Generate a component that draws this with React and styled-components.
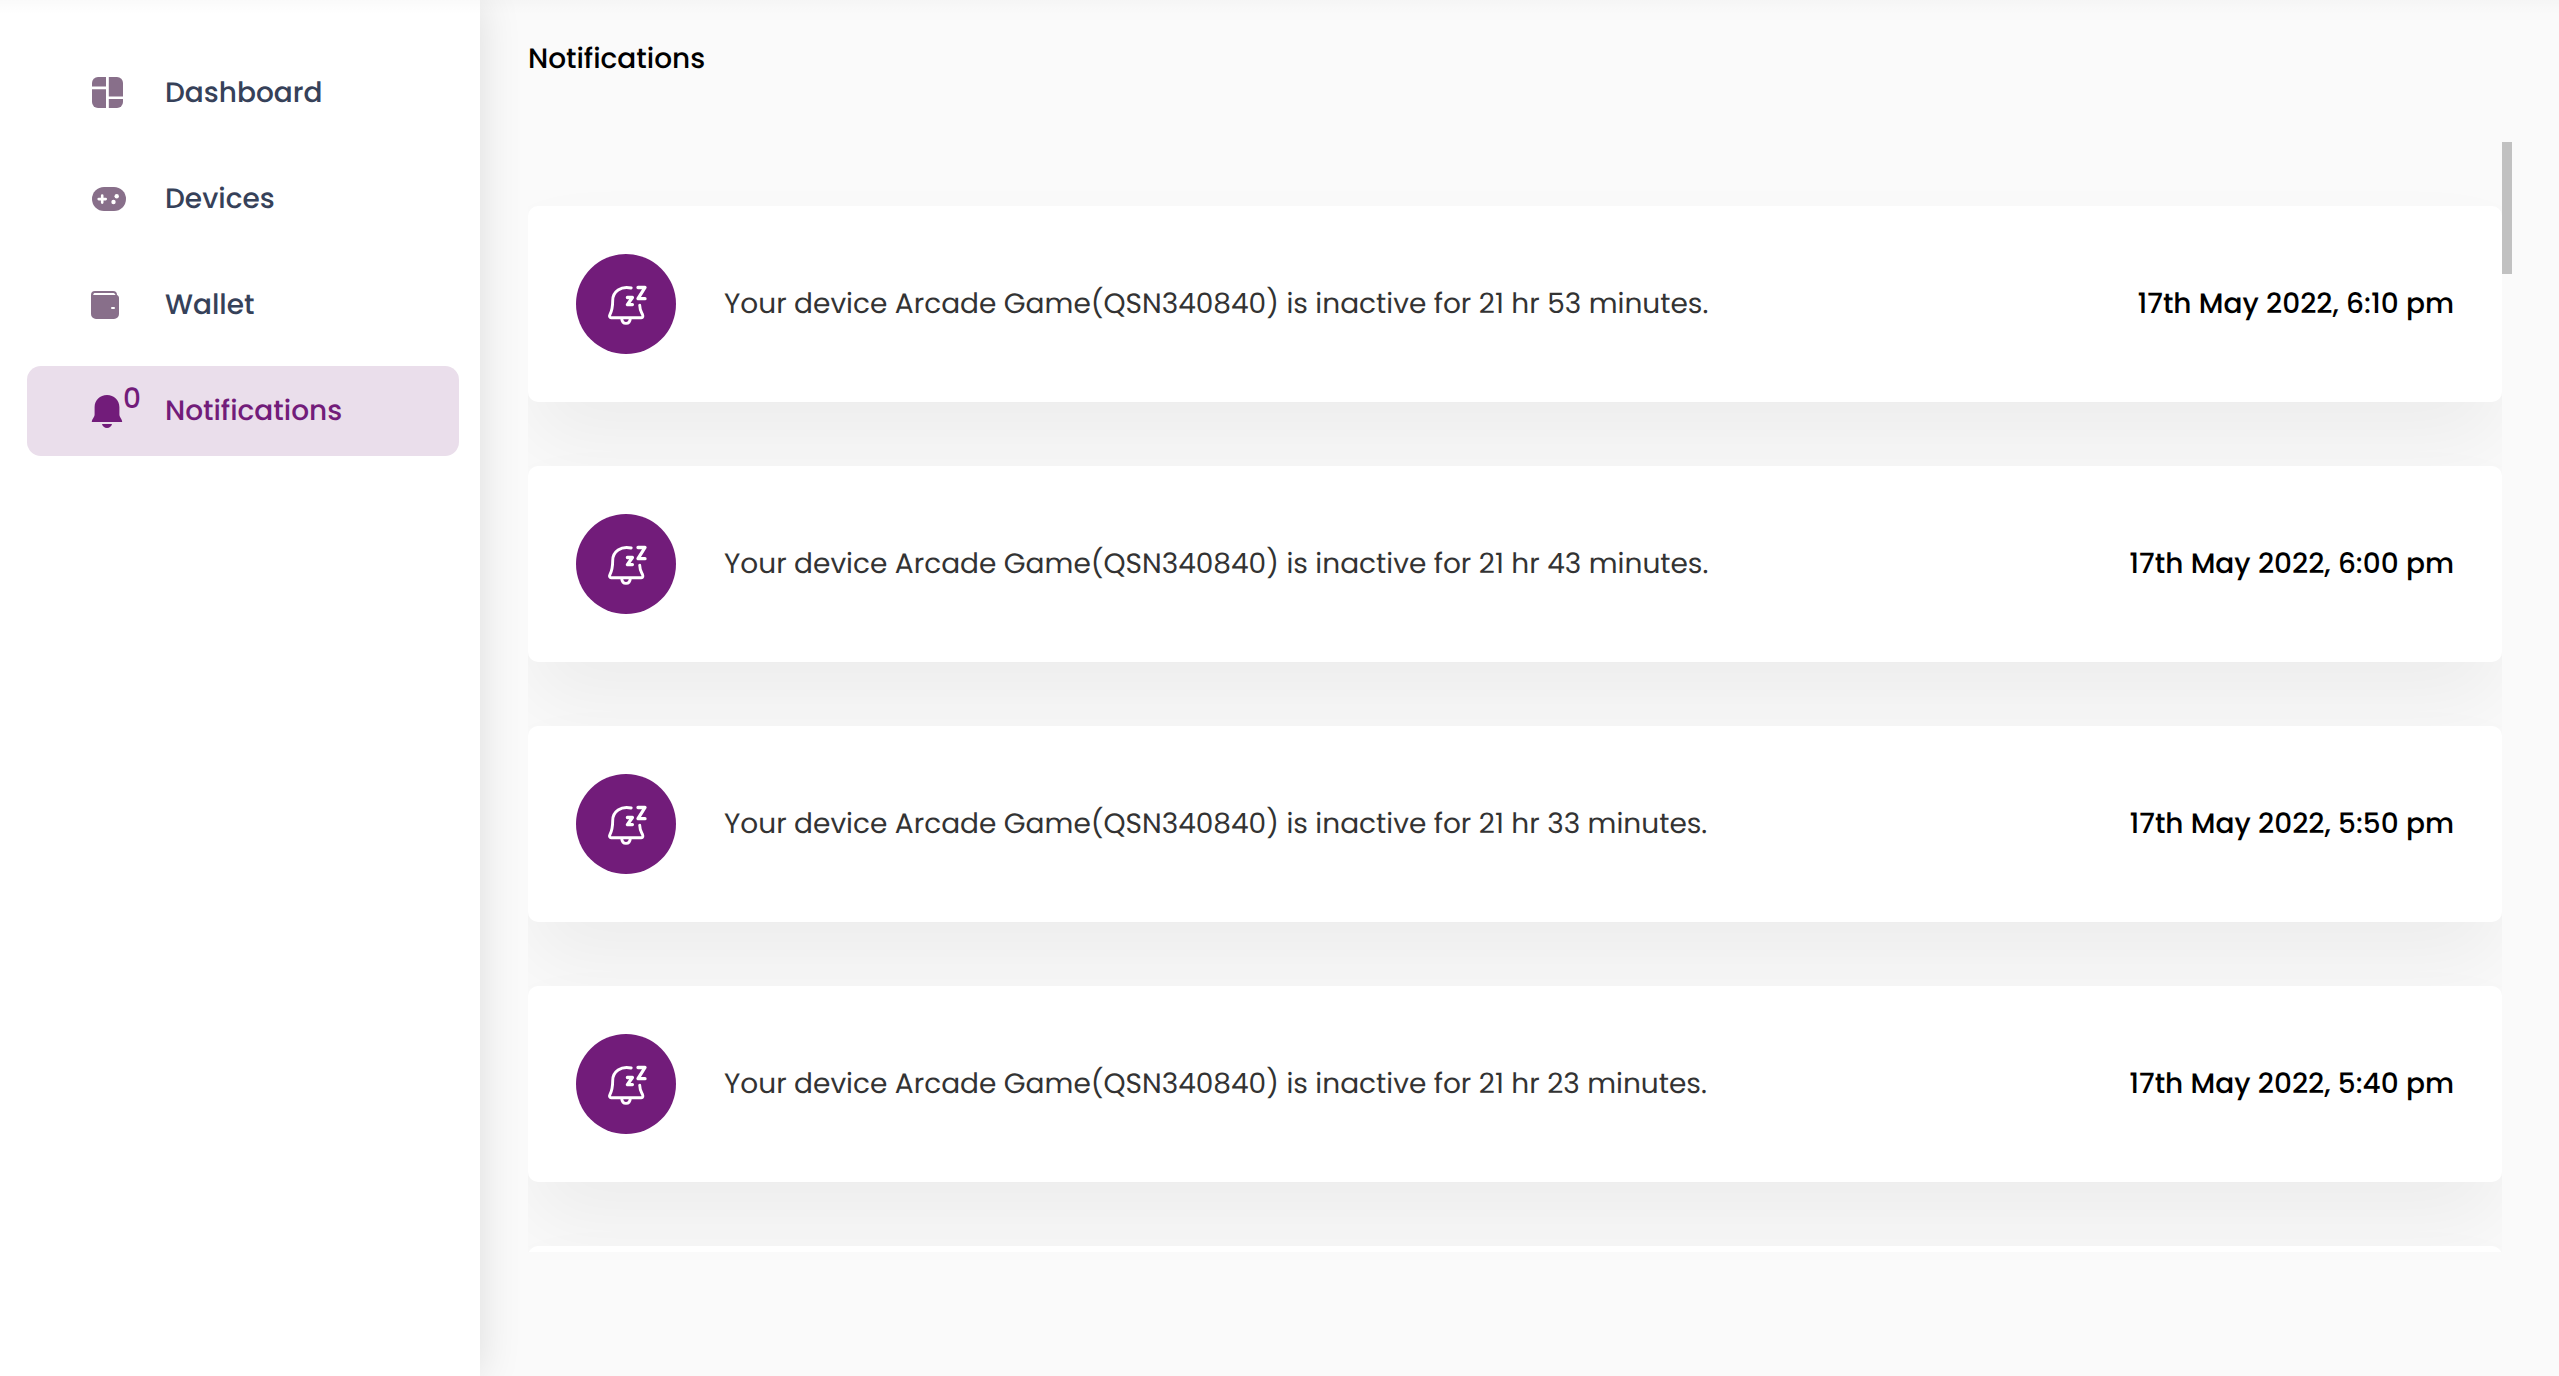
import React from "react";
import styled, { createGlobalStyle } from "styled-components";

const GlobalStyle = createGlobalStyle`
  *, *::before, *::after { box-sizing: border-box; }
  body {
    margin: 0;
    background: #fafafa;
    font-family: Poppins, Inter, "Noto Sans", sans-serif;
    font-size: 28px;
    line-height: 44px;
    color: #000;
    text-rendering: geometricPrecision;
  }
`;

const Page = styled.div`
  display: flex;
  height: 100vh;
  overflow: hidden;
`;

const topShade = "linear-gradient(rgba(0, 0, 0, 0.02), rgba(0, 0, 0, 0)) 0 0 / 100% 14px no-repeat";

const Sidebar = styled.nav`
  position: relative;
  flex: 0 0 480px;
  padding: 48px 21px 48px 27px;
  background: ${topShade}, #fff;
  box-shadow: 0 0 40px rgba(0, 0, 0, 0.12);
`;

const NavList = styled.ul`
  display: flex;
  flex-direction: column;
  gap: 16px;
  margin: 0;
  padding: 0;
  list-style: none;
`;

const NavLink = styled.a`
  display: flex;
  align-items: center;
  gap: 38px;
  height: 90px;
  padding: 0 64px;
  border-radius: 14px;
  font-weight: 500;
  text-decoration: none;
  color: ${(p) => (p.$active ? "#721c7a" : "#364159")};
  background: ${(p) => (p.$active ? "#eadeeb" : "transparent")};
`;

const NavIcon = styled.span`
  position: relative;
  display: flex;
  color: ${(p) => (p.$active ? "#721c7a" : "#886f8a")};
`;

const Badge = styled.span`
  position: absolute;
  left: 32px;
  top: -16px;
`;

const Main = styled.main`
  flex: 1;
  min-width: 0;
  padding: 37px 47px 0 48px;
  background: ${topShade};
`;

const Title = styled.h1`
  margin: 0 0 61px;
  font-size: 28px;
  line-height: 44px;
  font-weight: 500;
`;

const Scroller = styled.section`
  display: flex;
  height: calc(100vh - 266px);
`;

const List = styled.ul`
  flex: 1;
  min-width: 0;
  margin: 0;
  padding: 0;
  list-style: none;
  overflow: hidden;
`;

const Scrollbar = styled.div`
  flex: 0 0 10px;
`;

const Thumb = styled.div`
  height: 132px;
  background: #c1c1c1;
`;

const Card = styled.li`
  display: flex;
  align-items: center;
  gap: 48px;
  min-height: 196px;
  margin-top: 64px;
  padding: 48px;
  border-radius: 10px;
  background: #fff;
  box-shadow: 0 42px 80px rgba(0, 0, 0, 0.055);
`;

const Avatar = styled.span`
  display: flex;
  flex: 0 0 100px;
  align-items: center;
  justify-content: center;
  height: 100px;
  border-radius: 50%;
  background: #721c7a;
  color: #fff;
`;

const Message = styled.p`
  flex: 1;
  margin: 0;
  color: #333;
`;

const Time = styled.time`
  font-weight: 500;
  white-space: nowrap;
`;

const DashboardIcon = () => (
  <svg width="36" height="36" viewBox="0 0 36 36" fill="currentColor" aria-hidden="true">
    <path d="M7 2h8v9.6H1V8a6 6 0 0 1 6-6z" />
    <path d="M1 14.2h14V33H7a6 6 0 0 1-6-6z" />
    <path d="M17.8 2H26a6 6 0 0 1 6 6v13.4H17.8z" />
    <path d="M17.8 24H32v3a6 6 0 0 1-6 6h-8.2z" />
  </svg>
);

const DevicesIcon = () => (
  <svg width="36" height="36" viewBox="0 0 36 36" aria-hidden="true">
    <rect x="1" y="6" width="34" height="24" rx="12" fill="currentColor" />
    <path d="M11.2 14.6v7M7.7 18.1h7" stroke="#fff" strokeWidth="2.6" strokeLinecap="round" />
    <circle cx="25.7" cy="15.2" r="2.2" fill="#fff" />
    <circle cx="22.5" cy="21" r="2.2" fill="#fff" />
  </svg>
);

const WalletIcon = () => (
  <svg width="36" height="36" viewBox="0 0 36 36" aria-hidden="true">
    <path d="M4 4h18a4 4 0 0 1 4 4c1.300.5 2 1.600 2 3v16a5 5 0 0 1-5 5H5a5 5 0 0 1-5-5V8a4 4 0 0 1 4-4z" fill="currentColor" />
    <path d="M3.400 5.900h19.200q1.500.3 1.900 2.100H2.200q0-1.700 1.200-2.100z" fill="#fff" />
    <rect x="20" y="20" width="4" height="2" rx="1" fill="#fff" />
  </svg>
);

const BellIcon = () => (
  <svg width="36" height="36" viewBox="0 0 36 36" fill="currentColor" aria-hidden="true">
    <path d="M16 2c7 0 12.400 5.200 12.400 12v7.500c0 3 2.800 4.300 2.800 7.500H.8c0-3.200 2.800-4.500 2.800-7.500V14C3.600 7.200 9 2 16 2z" />
    <path d="M11 31h10c-.4 2.300-2.400 4-5 4s-4.600-1.700-5-4z" />
  </svg>
);

const SnoozeIcon = () => (
  <svg
    width="44"
    height="44"
    viewBox="0 0 44 44"
    fill="none"
    stroke="currentColor"
    strokeWidth="2.900"
    strokeLinecap="round"
    strokeLinejoin="round"
    aria-hidden="true"
  >
    <path d="M27.200 6C17 3.600 8.700 9.600 8.700 18.500c0 8-.9 10.500-2.700 14-.9 1.700-.6 3.200 1 3.200h30.300c1.600 0 1.900-1.500 1.200-3.200-1.500-3-2.700-4.500-2.800-9.300" />
    <path d="M17.700 36.400c.2 3.200 1.900 5 4.300 5s4.100-1.800 4.300-5" />
    <path d="M23.400 15.500h5l-5 7.100h5" strokeWidth="3.300" />
    <path d="M34 5.500h7l-7 11.200h7" strokeWidth="3.300" />
  </svg>
);

const navItems = [
  { label: "Dashboard", Icon: DashboardIcon },
  { label: "Devices", Icon: DevicesIcon },
  { label: "Wallet", Icon: WalletIcon },
  { label: "Notifications", Icon: BellIcon, active: true, count: 0 },
];

const notifications = [
  { idle: "21 hr 53 minutes", time: "17th May 2022, 6:10 pm" },
  { idle: "21 hr 43 minutes", time: "17th May 2022, 6:00 pm" },
  { idle: "21 hr 33 minutes", time: "17th May 2022, 5:50 pm" },
  { idle: "21 hr 23 minutes", time: "17th May 2022, 5:40 pm" },
];

export default function App() {
  return (
    <>
      <GlobalStyle />
      <Page>
        <Sidebar>
          <NavList>
            {navItems.map(({ label, Icon, active, count }) => (
              <li key={label}>
                <NavLink href="#" $active={active}>
                  <NavIcon $active={active}>
                    <Icon />
                    {count !== undefined && <Badge>{count}</Badge>}
                  </NavIcon>
                  {label}
                </NavLink>
              </li>
            ))}
          </NavList>
        </Sidebar>
        <Main>
          <Title>Notifications</Title>
          <Scroller>
            <List>
              {notifications.map(({ idle, time }) => (
                <Card key={time}>
                  <Avatar>
                    <SnoozeIcon />
                  </Avatar>
                  <Message>Your device Arcade Game(QSN340840) is inactive for {idle}.</Message>
                  <Time>{time}</Time>
                </Card>
              ))}
              <Card aria-hidden="true" />
            </List>
            <Scrollbar>
              <Thumb />
            </Scrollbar>
          </Scroller>
        </Main>
      </Page>
    </>
  );
}
